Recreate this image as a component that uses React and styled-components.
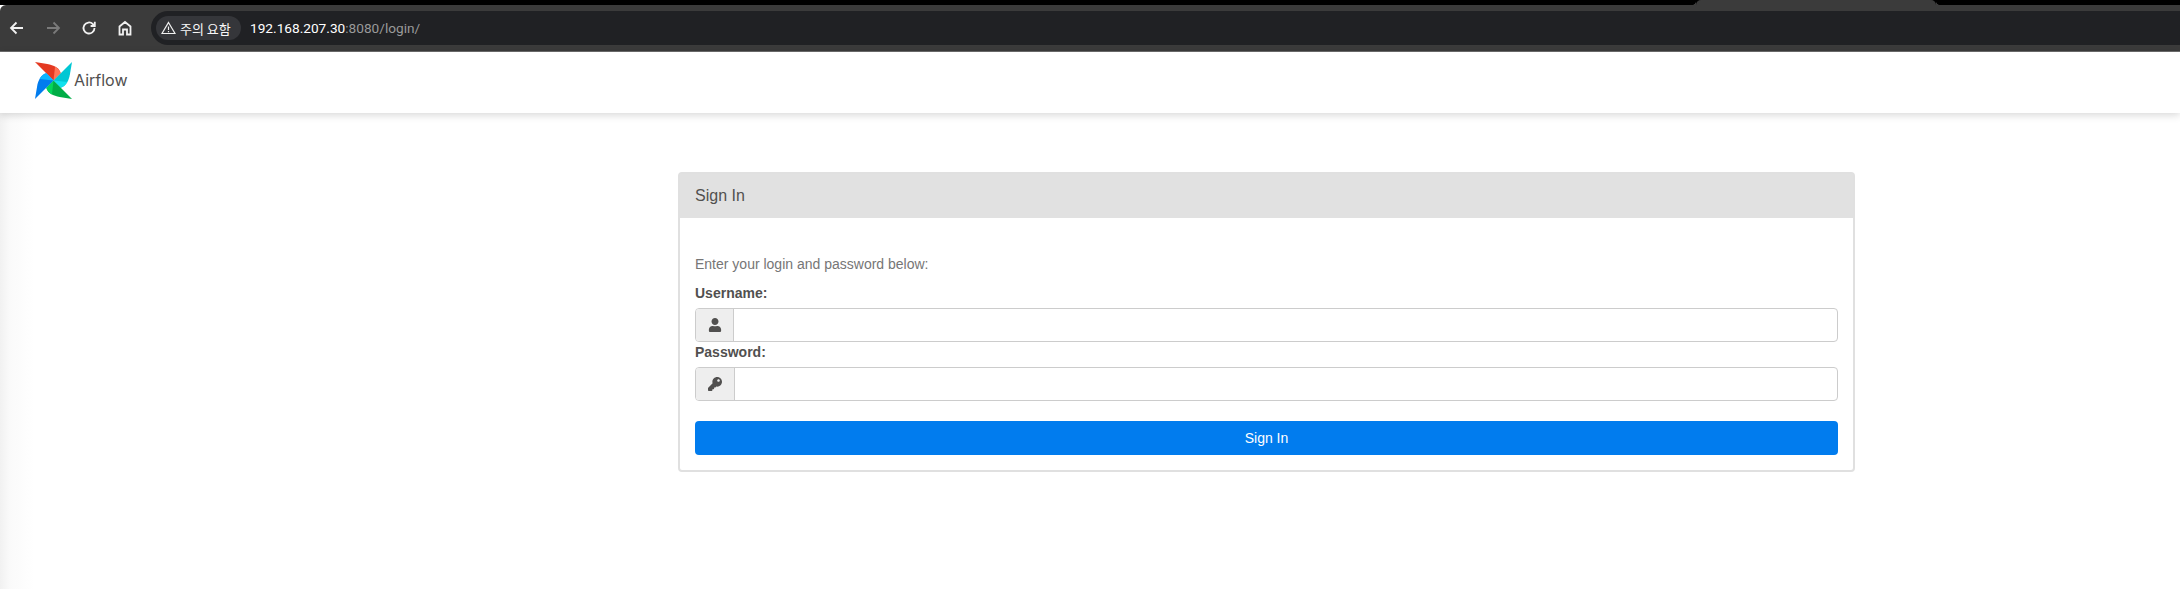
import React from "react";
import styled, { createGlobalStyle } from "styled-components";
import { FaUser, FaKey } from "react-icons/fa";

const GlobalStyle = createGlobalStyle`
  html, body {
    margin: 0;
    height: 100%;
    background: #fff;
    overflow: hidden;
  }
  body {
    font-family: "Liberation Sans", Arial, sans-serif;
    font-size: 14px;
    color: #404040;
  }
`;

const TabStrip = styled.div`
  height: 5px;
  background: #000;
  display: flex;
  justify-content: flex-end;
`;

const ActiveTab = styled.div`
  position: relative;
  width: 240px;
  height: 5px;
  margin-right: 244px;
  background: #3b3b3b;
  border-radius: 5px 5px 0 0;

  &::before,
  &::after {
    content: "";
    position: absolute;
    bottom: 0;
    width: 5px;
    height: 5px;
  }
  &::before {
    left: -5px;
    background: radial-gradient(circle at 0 0, transparent 5px, #3b3b3b 5.5px);
  }
  &::after {
    right: -5px;
    background: radial-gradient(circle at 100% 0, transparent 5px, #3b3b3b 5.5px);
  }
`;

const Toolbar = styled.div`
  height: 46px;
  background: #3b3b3b;
  border-bottom: 1px solid #6d6d6d;
  border-top-left-radius: 6px;
  display: flex;
  align-items: center;
  padding-left: 8px;
`;

const NavIcons = styled.div`
  display: flex;
  align-items: center;
  gap: 18px;
  margin-right: 17px;
`;

const NavIcon = styled.svg`
  width: 18px;
  height: 18px;
  display: block;
  fill: none;
  stroke: ${(p) => (p.$dim ? "#7a7a7a" : "#f1f1f1")};
  stroke-width: 1.8;
`;

const AddressBar = styled.div`
  flex: 1;
  height: 34px;
  background: #202124;
  border-radius: 17px 0 0 17px;
  display: flex;
  align-items: center;
  padding-left: 5px;
`;

const SecurityChip = styled.div`
  width: 85px;
  height: 24px;
  box-sizing: border-box;
  padding-left: 5px;
  border-radius: 12px;
  background: #35363a;
  display: flex;
  align-items: center;
  gap: 4px;
  color: #f8f8f8;
  font: 13px "Noto Sans CJK KR", sans-serif;
`;

const Url = styled.div`
  margin-left: 9px;
  font: 13.66px Roboto, sans-serif;
  color: #9a9a9a;
  b {
    font-weight: 400;
    color: #fff;
  }
`;

const Navbar = styled.nav`
  height: 61px;
  box-sizing: border-box;
  background: #fff;
  box-shadow: 0 2px 8px rgba(0, 0, 0, 0.16);
  display: flex;
  align-items: center;
  padding: 0 0 5px 35px;
  position: relative;
`;

const BrandName = styled.span`
  font: 16px Inter, "Open Sans", sans-serif;
  color: #51504f;
  margin-left: 2px;
`;

const Page = styled.main`
  height: 476px;
  background: linear-gradient(90deg, #f1f1f1 0, #fafafa 10px, #fff 34px);
`;

const Content = styled.div`
  width: 1177px;
  margin-left: 678px;
  padding-top: 59px;
`;

const Card = styled.section`
  border: 2px solid #e0e0e0;
  border-radius: 4px;
  background: #fff;
  height: 300px;
  box-sizing: border-box;
`;

const CardHeader = styled.div`
  height: 44px;
  background: #e1e1e1;
  color: #51504f;
  font-size: 16px;
  line-height: 44px;
  padding-left: 15px;
`;

const CardBody = styled.form`
  padding: 36px 15px 0;
`;

const Hint = styled.p`
  margin: 0;
  color: #767676;
  font-size: 14px;
  line-height: 20px;
`;

const Label = styled.label`
  display: block;
  font-weight: 700;
  font-size: 14px;
  line-height: 20px;
  color: #51504f;
  margin-top: ${(p) => p.$top}px;
  margin-bottom: 5px;
`;

const InputGroup = styled.div`
  display: flex;
  height: 34px;
  box-sizing: border-box;
  border: 1px solid #ccc;
  border-radius: 4px;
  margin-bottom: ${(p) => p.$bottom || 0}px;
`;

const Addon = styled.span`
  width: ${(p) => p.$width}px;
  background: #eee;
  border-right: 1px solid #ccc;
  border-radius: 3px 0 0 3px;
  display: flex;
  align-items: center;
  justify-content: center;
  color: #51504f;
  font-size: 14px;
`;

const Input = styled.input`
  flex: 1;
  border: 0;
  outline: 0;
  background: transparent;
`;

const SubmitButton = styled.button`
  display: block;
  width: 100%;
  height: 34px;
  border: 0;
  border-radius: 4px;
  background: #017cee;
  color: #fff;
  font: 14px "Liberation Sans", Arial, sans-serif;
`;

const blades = [
  { angle: 0, dark: "#e43921", light: "#ff7557" },
  { angle: 90, dark: "#00c7d4", light: "#11e1ee" },
  { angle: 180, dark: "#00ad46", light: "#04d659" },
  { angle: 270, dark: "#017cee", light: "#0cb6ff" },
];

const PinwheelLogo = () => (
  <svg width="37" height="37" viewBox="0 0 36 36" aria-hidden="true">
    {blades.map((b) => (
      <g key={b.angle} transform={`rotate(${b.angle} 18 18)`}>
        <path d="M0 0 L12 2 C18 3 24 6 25 11 L18 18 Z" fill={b.dark} />
        <path d="M18 18 L19.5 4.500 C22 6 24 8 25 11 Z" fill={b.light} />
      </g>
    ))}
  </svg>
);

export default function App() {
  return (
    <>
      <GlobalStyle />
      <TabStrip>
        <ActiveTab />
      </TabStrip>
      <Toolbar>
        <NavIcons>
          <NavIcon viewBox="0 0 18 18">
            <path d="M15 9H3.500M8.500 3.500 3 9l5.500 5.500" />
          </NavIcon>
          <NavIcon viewBox="0 0 18 18" $dim>
            <path d="M3 9h11.500M9.500 3.500 15 9l-5.500 5.500" />
          </NavIcon>
          <NavIcon viewBox="0 0 18 18">
            <path d="M14.500 9a5.500 5.500 0 1 1-1.600-3.900L14.500 7" />
            <path d="M14.800 2.800V7h-4.200" />
          </NavIcon>
          <NavIcon viewBox="0 0 18 18">
            <path d="M3.500 15.500V7.500L9 3l5.500 4.500v8h-3.500v-5H7v5z" />
          </NavIcon>
        </NavIcons>
        <AddressBar>
          <SecurityChip>
            <svg width="15" height="14" viewBox="0 0 15 14" fill="none" stroke="#f1f1f1" strokeWidth="1.2">
              <path d="M7.500 1.500 14 12.500H1z" />
              <path d="M7.500 5.500v3.500M7.500 10v1.200" />
            </svg>
            주의 요함
          </SecurityChip>
          <Url>
            <b>192.168.207.30</b>:8080/login/
          </Url>
        </AddressBar>
      </Toolbar>
      <Navbar>
        <PinwheelLogo />
        <BrandName>Airflow</BrandName>
      </Navbar>
      <Page>
        <Content>
          <Card>
            <CardHeader>Sign In</CardHeader>
            <CardBody>
              <Hint>Enter your login and password below:</Hint>
              <Label $top={9}>Username:</Label>
              <InputGroup>
                <Addon $width={37}>
                  <FaUser />
                </Addon>
                <Input />
              </InputGroup>
              <Label $top={0}>Password:</Label>
              <InputGroup $bottom={20}>
                <Addon $width={38}>
                  <FaKey />
                </Addon>
                <Input type="password" />
              </InputGroup>
              <SubmitButton type="button">Sign In</SubmitButton>
            </CardBody>
          </Card>
        </Content>
      </Page>
    </>
  );
}
